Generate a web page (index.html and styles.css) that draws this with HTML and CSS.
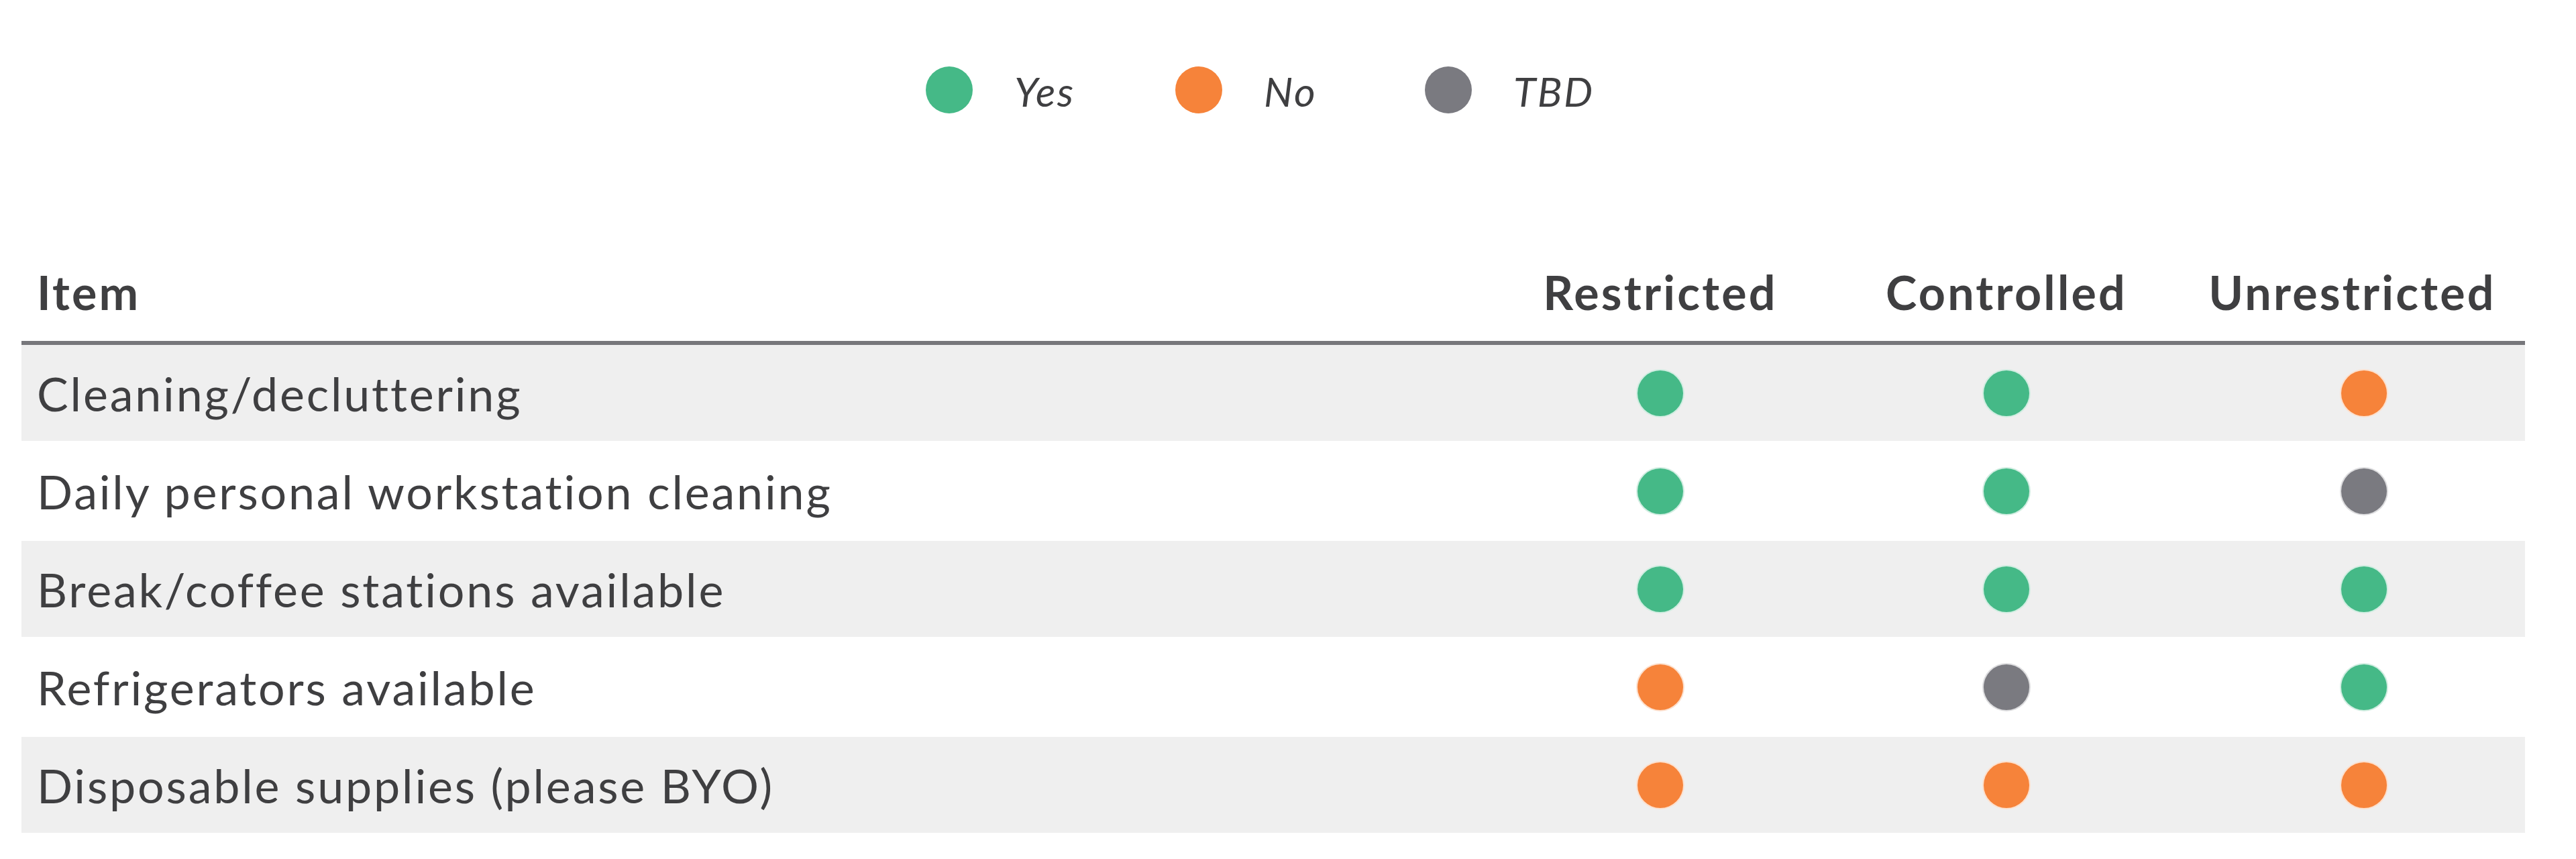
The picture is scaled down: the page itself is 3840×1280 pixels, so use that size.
FILE: index.html
```html
<!DOCTYPE html>
<html lang="en">
<head>
<meta charset="utf-8">
<title>Office readiness by zone</title>
<link rel="stylesheet" href="styles.css">
</head>
<body>
  <div class="legend">
    <div class="legend-item"><span class="dot dot-yes"></span><span class="legend-label">Yes</span></div>
    <div class="legend-item"><span class="dot dot-no"></span><span class="legend-label">No</span></div>
    <div class="legend-item"><span class="dot dot-tbd"></span><span class="legend-label">TBD</span></div>
  </div>

  <div class="table">
    <div class="row head">
      <div class="cell item">Item</div>
      <div class="cell mark">Restricted</div>
      <div class="cell mark">Controlled</div>
      <div class="cell mark">Unrestricted</div>
    </div>
    <div class="row shaded">
      <div class="cell item">Cleaning/decluttering</div>
      <div class="cell mark"><span class="dot dot-yes"></span></div>
      <div class="cell mark"><span class="dot dot-yes"></span></div>
      <div class="cell mark last"><span class="dot dot-no"></span></div>
    </div>
    <div class="row">
      <div class="cell item">Daily personal workstation cleaning</div>
      <div class="cell mark"><span class="dot dot-yes"></span></div>
      <div class="cell mark"><span class="dot dot-yes"></span></div>
      <div class="cell mark last"><span class="dot dot-tbd"></span></div>
    </div>
    <div class="row shaded">
      <div class="cell item">Break/coffee stations available</div>
      <div class="cell mark"><span class="dot dot-yes"></span></div>
      <div class="cell mark"><span class="dot dot-yes"></span></div>
      <div class="cell mark last"><span class="dot dot-yes"></span></div>
    </div>
    <div class="row">
      <div class="cell item">Refrigerators available</div>
      <div class="cell mark"><span class="dot dot-no"></span></div>
      <div class="cell mark"><span class="dot dot-tbd"></span></div>
      <div class="cell mark last"><span class="dot dot-yes"></span></div>
    </div>
    <div class="row shaded">
      <div class="cell item">Disposable supplies (please BYO)</div>
      <div class="cell mark"><span class="dot dot-no"></span></div>
      <div class="cell mark"><span class="dot dot-no"></span></div>
      <div class="cell mark last"><span class="dot dot-no"></span></div>
    </div>
    <div class="row">
      <div class="cell item"></div>
      <div class="cell mark"><span class="dot dot-yes"></span></div>
      <div class="cell mark"><span class="dot dot-yes"></span></div>
      <div class="cell mark last"><span class="dot dot-yes"></span></div>
    </div>
  </div>
</body>
</html>
```

FILE: styles.css
```css
html, body {
  margin: 0;
  padding: 0;
  background: #ffffff;
}

body {
  font-family: Lato, "Open Sans", sans-serif;
  color: #3f3f41;
}

/* Legend */
.legend {
  display: flex;
  justify-content: center;
  padding: 96px 0 0 36px;
}

.legend-item {
  width: 372px;
  display: flex;
  align-items: center;
  gap: 62px;
}

.legend-label {
  font-size: 61px;
  line-height: 72px;
  font-style: italic;
  letter-spacing: 2.5px;
  padding-top: 4px;
}

.dot {
  display: inline-block;
  width: 70px;
  height: 70px;
  border-radius: 50%;
  flex: none;
}

.dot-yes { background: #45b987; }
.dot-no { background: #f6833a; }
.dot-tbd { background: #7a7a80; }

/* Table */
.table {
  margin: 190px 76px 0 32px;
  display: flex;
  flex-direction: column;
}

.row {
  display: grid;
  grid-template-columns: 2185px 516px 516px 515px;
  height: 146px;
  align-items: center;
  border-bottom: 3px solid #ffffff;
  box-sizing: border-box;
}

.row.head {
  height: 152px;
  font-weight: 700;
  letter-spacing: 3.2px;
  border-bottom: 6px solid #77777b;
}

.row.shaded {
  background: #efefef;
}

.cell {
  font-size: 70px;
  line-height: 84px;
  letter-spacing: 2.8px;
}

.row.head .cell {
  letter-spacing: 3.2px;
}

.cell.item {
  padding-left: 23px;
}

.cell.mark {
  display: flex;
  justify-content: center;
  align-items: center;
}

.row .cell.mark .dot {
  width: 68px;
  height: 68px;
  border: 2px solid rgba(255, 255, 255, 0.75);
}

.cell.mark.last {
  padding-left: 34px;
}
```
